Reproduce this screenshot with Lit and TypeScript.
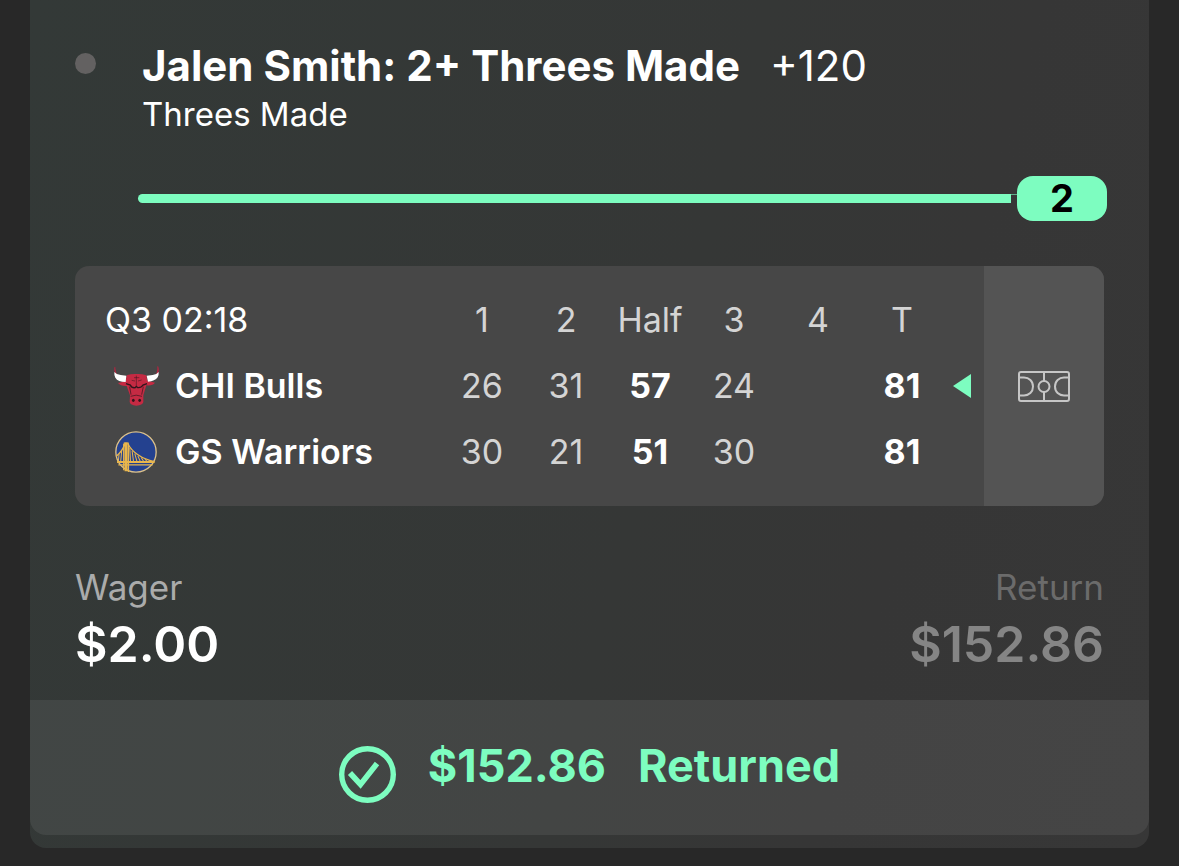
import { LitElement, html, svg, css } from "lit";
import { customElement, property } from "lit/decorators.js";
import { classMap } from "lit/directives/class-map.js";

type Team = { name: string; logo: unknown; scores: string[]; possession: boolean };

const bulls = svg`
  <svg class="logo" viewBox="0 0 135 120" width="45" height="40" aria-hidden="true">
    <path fill="#c4203f" d="M2 2Q0 10 2 18L10 26Q3 16 4 4ZM132 0Q136 10 133 20L125 27Q132 16 130 2Z"/>
    <path fill="#c52a43" d="M38 28Q52 23 67 24Q82 23 97 28L100 44L123 50Q116 60 97 58L88 88L88 108Q86 118 67 119Q49 118 47 108L48 88L38 60Q20 61 12 51L35 46Z"/>
    <path fill="#fff" d="M1 18Q7 26 20 27L37 29L35 48Q12 48 4 35Q0 27 1 18ZM134 18Q128 26 116 27L98 29L102 47Q123 46 131 34Q135 26 134 18Z"/>
    <g fill="none" stroke="#30151c" stroke-width="4">
      <path d="M36 53L49 57Q53 67 64 65L67 61L71 65Q82 66 87 57L99 53"/>
      <path stroke-width="2" d="M47 62L51 86M88 62L83 86M50 91Q66 84 84 91"/>
      <path stroke-width="1.5" d="M53 43L63 45M72 45L83 42M60 35L76 35M67 29V58"/>
    </g>
    <ellipse cx="58" cy="103" rx="4" ry="5" fill="#30151c"/>
    <ellipse cx="77" cy="103" rx="4" ry="5" fill="#30151c"/>
  </svg>`;

const warriors = svg`
  <svg class="logo" viewBox="0 0 125 125" width="42" height="42" aria-hidden="true">
    <circle cx="62.5" cy="62.5" r="60" fill="#24418f" stroke="#dbc08a" stroke-width="4"/>
    <g fill="none" stroke="#e9b64c">
      <path stroke-width="9" d="M33 34V120"/>
      <path stroke-width="4" d="M26 38V117M40 38V122M26 36H41"/>
      <path stroke-width="4" d="M4 75Q22 60 30 38M38 38Q60 78 117 91"/>
      <path stroke-width="6" d="M6 92H118"/>
      <path stroke-width="4" d="M10 101H112"/>
      <path stroke-width="3" d="M44 50L46 90M51 59L55 90M59 67L65 90M68 74L75 90M78 79L85 90M89 84L95 90M20 58L17 90M12 69L10 90"/>
    </g>
  </svg>`;

const court = svg`
  <svg viewBox="0 0 52 31" width="52" height="31" aria-hidden="true">
    <g fill="none" stroke="#c6c6c6" stroke-width="2">
      <rect x="1" y="1" width="50" height="29" rx="2"/>
      <path d="M26 1V10M26 21V30"/>
      <circle cx="26" cy="15.5" r="5.5"/>
      <path d="M2 6.5H6C11 6.5 15 10 15 15.5S11 24.5 6 24.5H2M50 6.5H46C41 6.5 37 10 37 15.5S41 24.5 46 24.5H50"/>
    </g>
  </svg>`;

const check = svg`
  <svg class="check" viewBox="0 0 57 57" width="57" height="57" aria-hidden="true">
    <g fill="none" stroke="#7dfdc0">
      <circle cx="28.5" cy="28.5" r="25.8" stroke-width="5.4"/>
      <path stroke-width="5.6" d="M11 27L21.5 38.5L38 17.5"/>
    </g>
  </svg>`;

@customElement("score-board")
export class ScoreBoard extends LitElement {
  @property() clock = "";
  @property({ attribute: false }) periods: string[] = [];
  @property({ attribute: false }) teams: Team[] = [];

  static styles = css`
    :host { display: block; }
    .board {
      display: flex;
      border-radius: 14px;
      overflow: hidden;
      background: #474747;
    }
    .scores { flex: 1; padding: 21px 0 21px 30px; }
    table { width: 100%; border-collapse: collapse; table-layout: fixed; }
    th, td { padding: 0; height: 66px; text-align: center; font-weight: 400; color: #d4d4d4; }
    .period { width: 84px; }
    .arrow-col { width: 40px; }
    .clock { text-align: left; color: #fff; }
    .strong { font-weight: 700; color: #fff; }
    .team { display: flex; align-items: center; color: #fff; font-weight: 600; }
    .badge { width: 62px; display: flex; justify-content: center; margin-right: 8px; }
    .logo { display: block; }
    .arrow { display: block; margin-left: 9px; }
    .court {
      width: 120px;
      border: 0;
      padding: 0;
      display: grid;
      place-items: center;
      background: #545454;
      cursor: pointer;
    }
  `;

  render() {
    return html`
      <div class="board">
        <div class="scores">
          <table>
            <thead>
              <tr>
                <th class="clock" scope="col">${this.clock}</th>
                ${this.periods.map((p) => html`<th class="period" scope="col">${p}</th>`)}
                <td class="arrow-col"></td>
              </tr>
            </thead>
            <tbody>
              ${this.teams.map((t) => html`
                <tr>
                  <th scope="row">
                    <div class="team"><span class="badge">${t.logo}</span>${t.name}</div>
                  </th>
                  ${t.scores.map((s, i) => html`
                    <td class=${classMap({ strong: i === 2 || i === 5 })}>${s}</td>`)}
                  <td>
                    ${t.possession
                      ? svg`<svg class="arrow" viewBox="0 0 18 24" width="18" height="24" aria-hidden="true"><path fill="#7dfdc0" d="M18 0V24L0 12Z"/></svg>`
                      : ""}
                  </td>
                </tr>`)}
            </tbody>
          </table>
        </div>
        <button class="court" type="button" aria-label="Court view">${court}</button>
      </div>`;
  }
}

@customElement("app-root")
export class AppRoot extends LitElement {
  static styles = css`
    :host {
      display: block;
      box-sizing: border-box;
      min-height: 100vh;
      padding: 0 30px 18px;
      background: #282828;
      color: #fff;
      font-family: Inter, "Liberation Sans", sans-serif;
      font-size: 34px;
      line-height: 40px;
    }
    .card {
      padding-bottom: 13px;
      border-radius: 0 0 16px 16px;
      background: linear-gradient(105deg, #333937 0%, #353736 55%, #363636 75%, #373737 100%);
    }
    .body { padding: 40px 45px 28px; }
    .leg { display: grid; grid-template-columns: 67px 1fr; }
    .dot { width: 21px; height: 21px; margin-top: 13px; border-radius: 50%; background: #636161; }
    .title { display: flex; gap: 30px; margin: 0; font-size: 42px; line-height: 52px; font-weight: 700; }
    .odds { font-weight: 400; }
    .market { margin: 2px 0 0; font-size: 33px; }
    .progress { display: flex; align-items: center; margin: 42px -3px 45px 63px; }
    .track { flex: 1; height: 9px; border-radius: 5px 0 0 5px; background: #7dfdc0; }
    .link { width: 6px; height: 9px; box-sizing: border-box; border-top: 1px solid #5fb08a; }
    .count {
      width: 90px;
      border-radius: 16px;
      background: #7dfdc0;
      color: #000;
      font-size: 38px;
      line-height: 45px;
      font-weight: 700;
      text-align: center;
    }
    .totals { display: flex; justify-content: space-between; margin: 61px 0 0; }
    .label { color: #aaabab; font-size: 35px; }
    .value { margin: 9px 0 0; font-size: 50px; line-height: 56px; font-weight: 600; }
    .right { text-align: right; }
    .right .label { color: #6b6b6b; }
    .right .value { color: #858585; }
    .result {
      display: flex;
      align-items: flex-start;
      justify-content: center;
      gap: 32px;
      padding: 46px 0 32px;
      border-radius: 0 0 16px 16px;
      background: rgba(255, 255, 255, 0.07);
      color: #7dfdc0;
      font-size: 45px;
      font-weight: 700;
    }
    .check { display: block; }
  `;

  private periods = ["1", "2", "Half", "3", "4", "T"];
  private teams: Team[] = [
    { name: "CHI Bulls", logo: bulls, scores: ["26", "31", "57", "24", "", "81"], possession: true },
    { name: "GS Warriors", logo: warriors, scores: ["30", "21", "51", "30", "", "81"], possession: false },
  ];

  render() {
    return html`
      <main class="card">
        <div class="body">
          <section class="leg">
            <span class="dot"></span>
            <div>
              <h1 class="title">Jalen Smith: 2+ Threes Made <span class="odds">+120</span></h1>
              <p class="market">Threes Made</p>
            </div>
          </section>
          <div class="progress" role="progressbar" aria-label="Threes Made" aria-valuenow="2" aria-valuemax="2">
            <div class="track"></div>
            <div class="link"></div>
            <div class="count">2</div>
          </div>
          <score-board clock="Q3 02:18" .periods=${this.periods} .teams=${this.teams}></score-board>
          <dl class="totals">
            <div>
              <dt class="label">Wager</dt>
              <dd class="value">$2.00</dd>
            </div>
            <div class="right">
              <dt class="label">Return</dt>
              <dd class="value">$152.86</dd>
            </div>
          </dl>
        </div>
        <footer class="result">
          ${check}<span>$152.86</span><span>Returned</span>
        </footer>
      </main>`;
  }
}
